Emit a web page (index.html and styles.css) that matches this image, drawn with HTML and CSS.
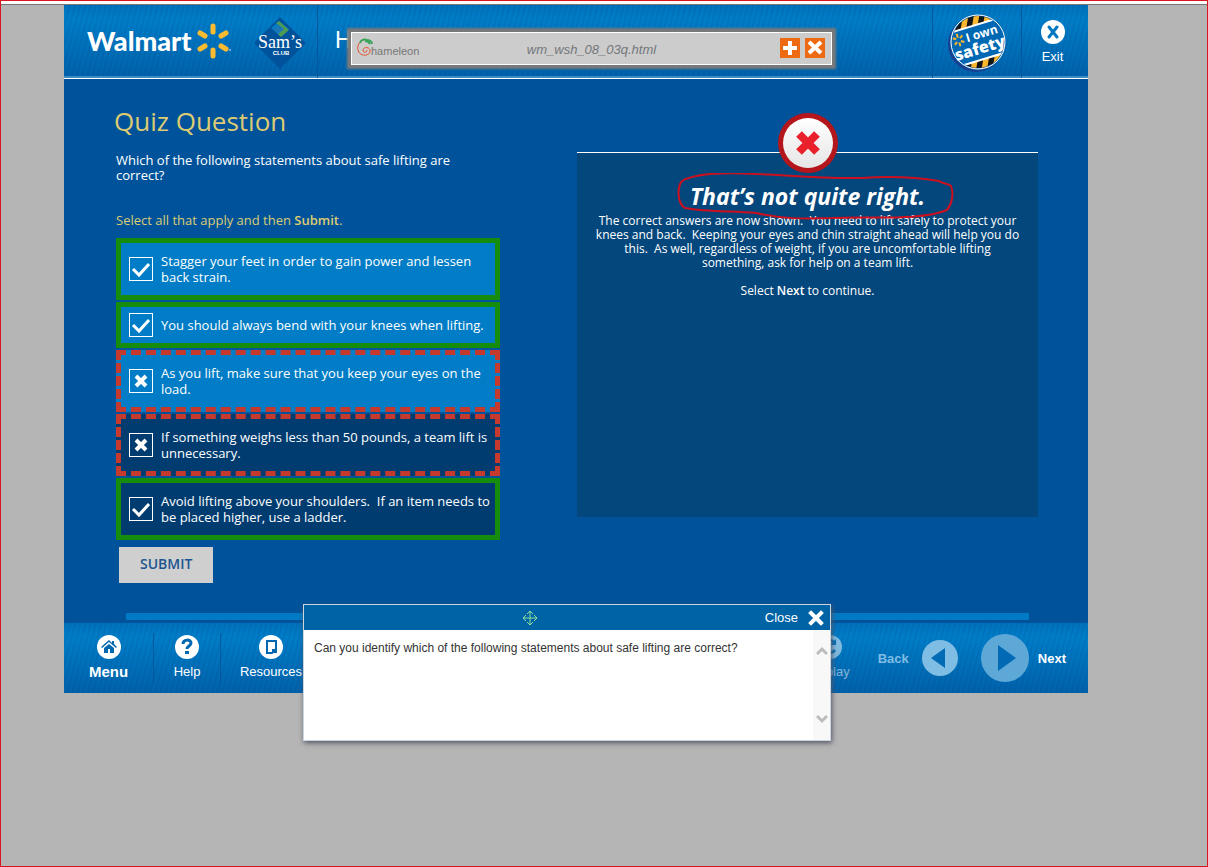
FILE: index.html
```html
<!DOCTYPE html>
<html lang="en">
<head>
<meta charset="utf-8">
<title>Quiz Question</title>
<link rel="stylesheet" href="styles.css">
</head>
<body>
<div class="page">
  <div class="course">
    <header class="top">
      <div class="brand">
        <span class="walmart">Walmart</span>
        <svg class="spark" viewBox="0 0 36 36" width="36" height="36" aria-hidden="true">
          <g stroke="#fdbb30" stroke-width="5" stroke-linecap="round">
            <path d="M17 3v6M17 27v6M4 10l5 3M25 23l5 3M4 26l5-3M25 13l5-3"/>
          </g>
          <circle cx="34" cy="27" r="1" fill="#8fc0e6"/>
        </svg>
      </div>
      <svg class="sams" viewBox="0 0 52 52" width="52" height="52" role="img" aria-label="Sam's Club">
        <path d="M26 0L52 26 26 52 0 26z" fill="#00529b"/>
        <path d="M25 4l10 8-9 7-9-8z" fill="#007dc6"/>
        <path d="M25 4l10 9-8 7-3-3 5-5-7-6z" fill="#4d9a55"/>
        <path d="M25 8l5 4-6 5-5-5z" fill="#1b78b8"/>
        <text class="sams-name" x="26" y="31" text-anchor="middle">Sam’s</text>
        <text class="sams-club" x="27" y="38" text-anchor="middle">CLUB</text>
      </svg>
      <div class="course-title">H</div>
      <div class="safety">
        <svg viewBox="0 0 60 60" width="60" height="60" role="img" aria-label="I own safety">
          <defs><clipPath id="disc"><circle cx="31" cy="29" r="26"/></clipPath></defs>
          <circle cx="29" cy="31" r="28" fill="#1b3f8f"/>
          <circle cx="31" cy="29" r="28" fill="#0067b3"/>
          <g clip-path="url(#disc)">
            <g transform="rotate(-17 31 29)">
              <path d="M0-2h62v14H0zM0 47h62v14H0z" fill="#151515"/>
              <path d="M13-2h6l-7 14H6zM25-2h6l-7 14h-6zM37-2h6l-7 14h-6zM49-2h6l-7 14h-6zM19 47h6l-7 14h-6zM31 47h6l-7 14h-6zM43 47h6l-7 14h-6zM55 47h6l-7 14h-6z" fill="#fdb72f"/>
              <path d="M0 12h62M0 47h62" stroke="#fff" stroke-width="2"/>
              <path d="M13 15v4M13 24v4M8 18l3 2M15 23l3 2M8 25l3-2M15 20l3-2" stroke="#fdb72f" stroke-width="2"/>
            </g>
          </g>
          <g transform="rotate(-17 31 29)">
            <text class="own" x="37" y="26" text-anchor="middle">I own</text>
            <text class="safe" x="31" y="41" text-anchor="middle">safety</text>
          </g>
          <circle cx="31" cy="29" r="27" fill="none" stroke="#fff" stroke-width="1"/>
        </svg>
      </div>
      <button class="exit" type="button">
        <svg viewBox="0 0 24 24" width="24" height="24" aria-hidden="true"><circle cx="12" cy="12" r="12" fill="#fff"/><path d="M8 7l8 10M16 7l-8 10" stroke="#0077c0" stroke-width="3" stroke-linecap="round"/></svg>
        Exit
      </button>
    </header>

    <main class="lesson">
      <section class="quiz">
        <h1>Quiz Question</h1>
        <p class="question">Which of the following statements about safe lifting are correct?</p>
        <p class="hint">Select all that apply and then <b>Submit</b>.</p>
        <form class="answers">
          <label class="answer right">
            <span class="tick"><input type="checkbox" checked><svg viewBox="0 0 24 24" width="24" height="24"><path d="M4 12l6 6 10-11" fill="none" stroke="#fff" stroke-width="3"/></svg></span>
            <span class="label">Stagger your feet in order to gain power and lessen back strain.</span>
          </label>
          <label class="answer right">
            <span class="tick"><input type="checkbox" checked><svg viewBox="0 0 24 24" width="24" height="24"><path d="M4 12l6 6 10-11" fill="none" stroke="#fff" stroke-width="3"/></svg></span>
            <span class="label">You should always bend with your knees when lifting.</span>
          </label>
          <label class="answer wrong">
            <span class="tick"><input type="checkbox"><svg viewBox="0 0 24 24" width="24" height="24"><path d="M7 7l10 10M17 7l-10 10" fill="none" stroke="#fff" stroke-width="4"/></svg></span>
            <span class="label">As you lift, make sure that you keep your eyes on the load.</span>
          </label>
          <label class="answer wrong dark">
            <span class="tick"><input type="checkbox"><svg viewBox="0 0 24 24" width="24" height="24"><path d="M7 7l10 10M17 7l-10 10" fill="none" stroke="#fff" stroke-width="4"/></svg></span>
            <span class="label">If something weighs less than 50 pounds, a team lift is unnecessary.</span>
          </label>
          <label class="answer right dark">
            <span class="tick"><input type="checkbox" checked><svg viewBox="0 0 24 24" width="24" height="24"><path d="M4 12l6 6 10-11" fill="none" stroke="#fff" stroke-width="3"/></svg></span>
            <span class="label">Avoid lifting above your shoulders.&nbsp; If an item needs to be placed higher, use a ladder.</span>
          </label>
          <button class="submit" type="button">SUBMIT</button>
        </form>
      </section>

      <section class="feedback">
        <svg class="badge" viewBox="0 0 60 60" width="60" height="60" aria-hidden="true">
          <defs><linearGradient id="shine" x2="0" y2="1"><stop stop-color="#fff"/><stop offset="1" stop-color="#e6e6e6"/></linearGradient></defs>
          <circle cx="30" cy="30" r="30" fill="#b5161b"/><circle cx="30" cy="30" r="25" fill="url(#shine)"/>
          <path d="M21 21l18 18M39 21l-18 18" stroke="#e8212b" stroke-width="8"/>
        </svg>
        <h2>That’s not quite right.</h2>
        <p>The correct answers are now shown.&nbsp; You need to lift safely to protect your knees and back.&nbsp; Keeping your eyes and chin straight ahead will help you do this.&nbsp; As well, regardless of weight, if you are uncomfortable lifting something, ask for help on a team lift.</p>
        <p>Select <b>Next</b> to continue.</p>
        <svg class="scribble" viewBox="0 0 280 50" width="280" height="50" aria-hidden="true">
          <path d="M5 8C18 0 45-1 80 1C110 2 145 6 185 5C215 3 238 4 262 8C265 11 271 10 274 13C277 21 275 31 270 37C245 48 190 43 155 45C125 46 105 46 79 40C55 38 30 39 8 35C0 30 0 14 5 8" fill="none" stroke="#cc1020" stroke-width="2"/>
        </svg>
      </section>
    </main>

    <div class="progress"></div>

    <footer class="bottom">
      <button class="tool menu" type="button">
        <svg viewBox="0 0 24 24" width="24" height="24" aria-hidden="true"><circle cx="12" cy="12" r="12" fill="#fff"/><path d="M4 12l8-7 3 3V6h2v3l3 3-1 1-7-6-7 6zM7 13l5-4 5 4v5h-4v-4h-2v4H7z" fill="#0068b0"/></svg>
        Menu
      </button>
      <button class="tool help" type="button">
        <svg viewBox="0 0 24 24" width="24" height="24" aria-hidden="true"><circle cx="12" cy="12" r="12" fill="#fff"/><path d="M8 9c0-5 8-5 8-1 0 3-4 3-4 6" fill="none" stroke="#0068b0" stroke-width="3"/><path d="M10 16h4v3h-4z" fill="#0068b0"/></svg>
        Help
      </button>
      <button class="tool resources" type="button">
        <svg viewBox="0 0 24 24" width="24" height="24" aria-hidden="true"><circle cx="12" cy="12" r="12" fill="#fff"/><path d="M8 6h9v8l-4 4H8z" fill="none" stroke="#0068b0" stroke-width="2"/><path d="M13 14h5v4h-5z" fill="#0068b0"/></svg>
        Resources
      </button>
      <button class="tool replay" type="button">
        <svg viewBox="0 0 24 24" width="24" height="24" aria-hidden="true"><circle cx="12" cy="12" r="12" fill="#fff"/><path d="M16 7a6 6 0 1 0 1 8" fill="none" stroke="#0068b0" stroke-width="3"/><path d="M18 4v6h-6z" fill="#0068b0"/></svg>
        Replay
      </button>
      <button class="step back" type="button">Back
        <svg viewBox="0 0 36 36" width="36" height="36" aria-hidden="true"><circle cx="18" cy="18" r="18" fill="#7fbde4"/><path d="M9 18l14-10v20z" fill="#006ab4"/></svg>
      </button>
      <button class="step next" type="button">
        <svg viewBox="0 0 48 48" width="48" height="48" aria-hidden="true"><circle cx="24" cy="24" r="24" fill="#5ea8d8"/><path d="M17 11l18 13-18 13z" fill="#006ab4"/></svg>
        Next
      </button>
    </footer>
  </div>

  <aside class="debug-bar">
    <svg class="chameleon" viewBox="0 0 64 20" width="64" height="20" role="img" aria-label="Chameleon">
      <path d="M7 2C2 3 0 8 1 12c1 6 10 7 12 2 1-5-6-6-7-2 0 3 4 3 4 0" fill="none" stroke="#e5532d" stroke-width="1"/>
      <path d="M3 5c1-4 5-4 7-3 3 0 5 2 5 4M8 3c2 0 4 1 5 3" fill="none" stroke="#3aa35a" stroke-width="2"/>
      <text class="chameleon-name" x="14" y="17">hameleon</text>
    </svg>
    <span class="file">wm_wsh_08_03q.html</span>
    <button class="chip" type="button" aria-label="Expand"><svg viewBox="0 0 20 20" width="20" height="20"><path d="M10 3v14M3 10h14" stroke="#fff" stroke-width="4"/></svg></button>
    <button class="chip" type="button" aria-label="Close bar"><svg viewBox="0 0 20 20" width="20" height="20"><path d="M4 4l12 11M16 4L4 15" stroke="#fff" stroke-width="4"/></svg></button>
  </aside>

  <aside class="narration">
    <div class="narration-bar">
      <svg class="move" viewBox="0 0 16 16" width="16" height="16" aria-hidden="true"><path d="M8 1v14M1 8h14M5 4l3-3 3 3M5 12l3 3 3-3M4 5L1 8l3 3M12 5l3 3-3 3" fill="none" stroke="#8ee09a" stroke-width="1"/></svg>
      <button class="close" type="button">Close
        <svg viewBox="0 0 16 16" width="16" height="16" aria-hidden="true"><path d="M3 3l10 10M13 3L3 13" stroke="#fff" stroke-width="4" stroke-linecap="square"/></svg>
      </button>
    </div>
    <div class="narration-body">
      <p>Can you identify which of the following statements about safe lifting are correct?</p>
      <div class="scroller">
        <svg viewBox="0 0 12 10" width="12" height="10"><path d="M1 8l5-5 5 5" fill="none" stroke="#bcbcbc" stroke-width="3"/></svg>
        <svg viewBox="0 0 12 10" width="12" height="10"><path d="M1 2l5 5 5-5" fill="none" stroke="#bcbcbc" stroke-width="3"/></svg>
      </div>
    </div>
  </aside>
</div>
</body>
</html>
```
FILE: styles.css
```css
* { box-sizing: border-box; }
body {
  margin: 0;
  background: #b5b5b5;
  font-family: "Liberation Sans", Arial, sans-serif;
  color: #fff;
}
h1, h2, p { margin: 0; font-weight: normal; }
button { font: inherit; color: inherit; background: none; border: 0; padding: 0; margin: 0; }
svg { display: block; flex: none; }

.page {
  position: relative;
  min-height: 100vh;
  border: 1px solid #d8151c;
  padding-left: 63px;
}
.page::before {
  content: "";
  position: absolute;
  inset: 0 0 auto;
  height: 3px;
  background: #fff;
  border-bottom: 1px solid #777;
}
.course { max-width: 1024px; padding-top: 3px; background: #00539b; }

.top, .bottom {
  background:
    repeating-linear-gradient(105deg, rgba(0, 40, 90, .08) 0 2px, transparent 2px 5px),
    linear-gradient(#0071bb, #007dc8 20%, #0061aa);
}
.top {
  display: flex;
  align-items: stretch;
  height: 75px;
  border-bottom: 1px solid #fff;
  box-shadow: inset 0 -2px #3d8cc4;
}
.brand { display: flex; align-items: center; padding-left: 23px; width: 190px; gap: 3px; }
.walmart { font: 900 27px/32px Lato, sans-serif; width: 106px; }
.sams { margin-top: 13px; }
.sams-name { font: 18px/1 "Liberation Serif", serif; fill: #fff; }
.sams-club { font: bold 6px/1 "Liberation Sans", sans-serif; fill: #fff; }
.course-title {
  flex: 1;
  margin-left: 11px;
  padding: 22px 0 0 17px;
  border-left: 1px solid #00589e;
  font-size: 23px;
  line-height: 28px;
}
.safety { padding: 9px 0 0 14px; width: 89px; border-left: 1px solid #00589e; }
.own { font: bold 12px "Open Sans", sans-serif; fill: #fff; }
.safe { font: 800 16px "Open Sans", sans-serif; fill: #fff; }
.exit {
  width: 67px;
  padding: 16px 5px 0 0;
  border-left: 1px solid #00589e;
  font-size: 13px;
  line-height: 16px;
  display: flex;
  flex-direction: column;
  align-items: center;
  gap: 5px;
}

.lesson {
  display: grid;
  grid-template-columns: 384fr 461fr;
  column-gap: 77px;
  align-items: start;
  padding: 24px 50px 30px 52px;
  font-family: "Open Sans", "Noto Sans", sans-serif;
}
h1 { font-size: 26px; line-height: 36px; color: #dccb72; margin-left: -2px; }
b { font-weight: 600; }
.question { font-size: 13px; line-height: 15px; padding: 14px 30px 0 0; }
.hint { font-size: 13px; line-height: 16px; color: #dccb72; margin: 29px 0 10px; }
.answers { display: flex; flex-direction: column; gap: 2px; }
.answer {
  display: flex;
  align-items: center;
  gap: 8px;
  padding: 0 4px 0 8px;
  border: 5px solid #158c0c;
  background: #007dc6;
}
.answer.wrong { border: 5px dashed #c63a2d; }
.answer.dark { background: #003c70; }
.label { flex: 1; padding: 10px 0; font-size: 13px; line-height: 16px; }
.tick { display: grid; }
.tick > * { grid-area: 1 / 1; }
.tick input { appearance: none; width: 24px; height: 24px; margin: 0; border: 1px solid #fff; }
.tick svg { pointer-events: none; }
.submit {
  align-self: flex-start;
  margin: 5px 0 0 3px;
  padding: 0 21px 3px;
  height: 36px;
  background: #cfcfcf;
  color: #1c5590;
  font-weight: 600;
  font-size: 14px;
}

.feedback {
  position: relative;
  margin-top: 49px;
  min-height: 365px;
  padding: 27px 16px 0;
  border-top: 1px solid #fff;
  background: #04477c;
  text-align: center;
}
.badge { position: absolute; top: -40px; left: calc(50% - 30px); }
.feedback h2 { font-size: 23px; font-weight: bold; font-style: italic; line-height: 32px; }
.feedback p { font-size: 12px; line-height: 14px; margin: 2px 0 14px; }
.feedback p + p { margin-top: 0; }
.scribble { position: absolute; top: 20px; left: calc(50% - 131px); }

.progress { height: 7px; margin: 0 59px 3px 62px; background: #007ac4; border-radius: 1px; }

.bottom { display: flex; align-items: stretch; height: 70px; }
.tool {
  display: flex;
  flex-direction: column;
  align-items: center;
  gap: 5px;
  margin: 10px 0;
  padding-top: 2px;
  font-size: 13px;
  line-height: 16px;
}
.menu { width: 89px; font-size: 15px; font-weight: bold; }
.help { width: 67px; border-left: 1px solid #00589e; }
.resources { width: 101px; border-left: 1px solid #00589e; }
.replay { margin-left: auto; opacity: .5; }
.step { display: flex; align-items: center; font-size: 13px; font-weight: bold; }
.back { gap: 13px; margin-left: 28px; color: #7fbde4; }
.next { gap: 9px; margin: 0 22px 0 23px; }

.debug-bar {
  position: absolute;
  top: 31px;
  left: 350px;
  width: 481px;
  height: 33px;
  display: flex;
  align-items: center;
  gap: 5px;
  padding: 0 6px 1px 5px;
  border: 1px solid #fff;
  background: #ccc;
  box-shadow: 0 0 2px 4px #77797b;
}
.chameleon-name { font: 11px "Liberation Sans", sans-serif; fill: #777; }
.file { flex: 1; text-align: center; font-size: 13px; font-style: italic; color: #73777b; padding: 3px 18px 0 0; }
.chip { background: #ee6a12; }

.narration {
  position: absolute;
  top: 603px;
  left: 302px;
  width: 528px;
  border: 1px solid #c9d6df;
  background: #fff;
  box-shadow: 1px 2px 5px #556;
}
.narration-bar { display: flex; align-items: center; height: 25px; padding: 0 6px 0 218px; background: #0063a5; }
.close { display: flex; align-items: center; gap: 10px; margin-left: auto; font-size: 13px; }
.narration-body { display: flex; min-height: 110px; color: #333; }
.narration-body p { flex: 1; padding: 10px; font-size: 12px; line-height: 16px; }
.scroller {
  width: 17px;
  display: flex;
  flex-direction: column;
  align-items: center;
  justify-content: space-between;
  padding: 16px 0;
  background: #f8f8f8;
}
```
